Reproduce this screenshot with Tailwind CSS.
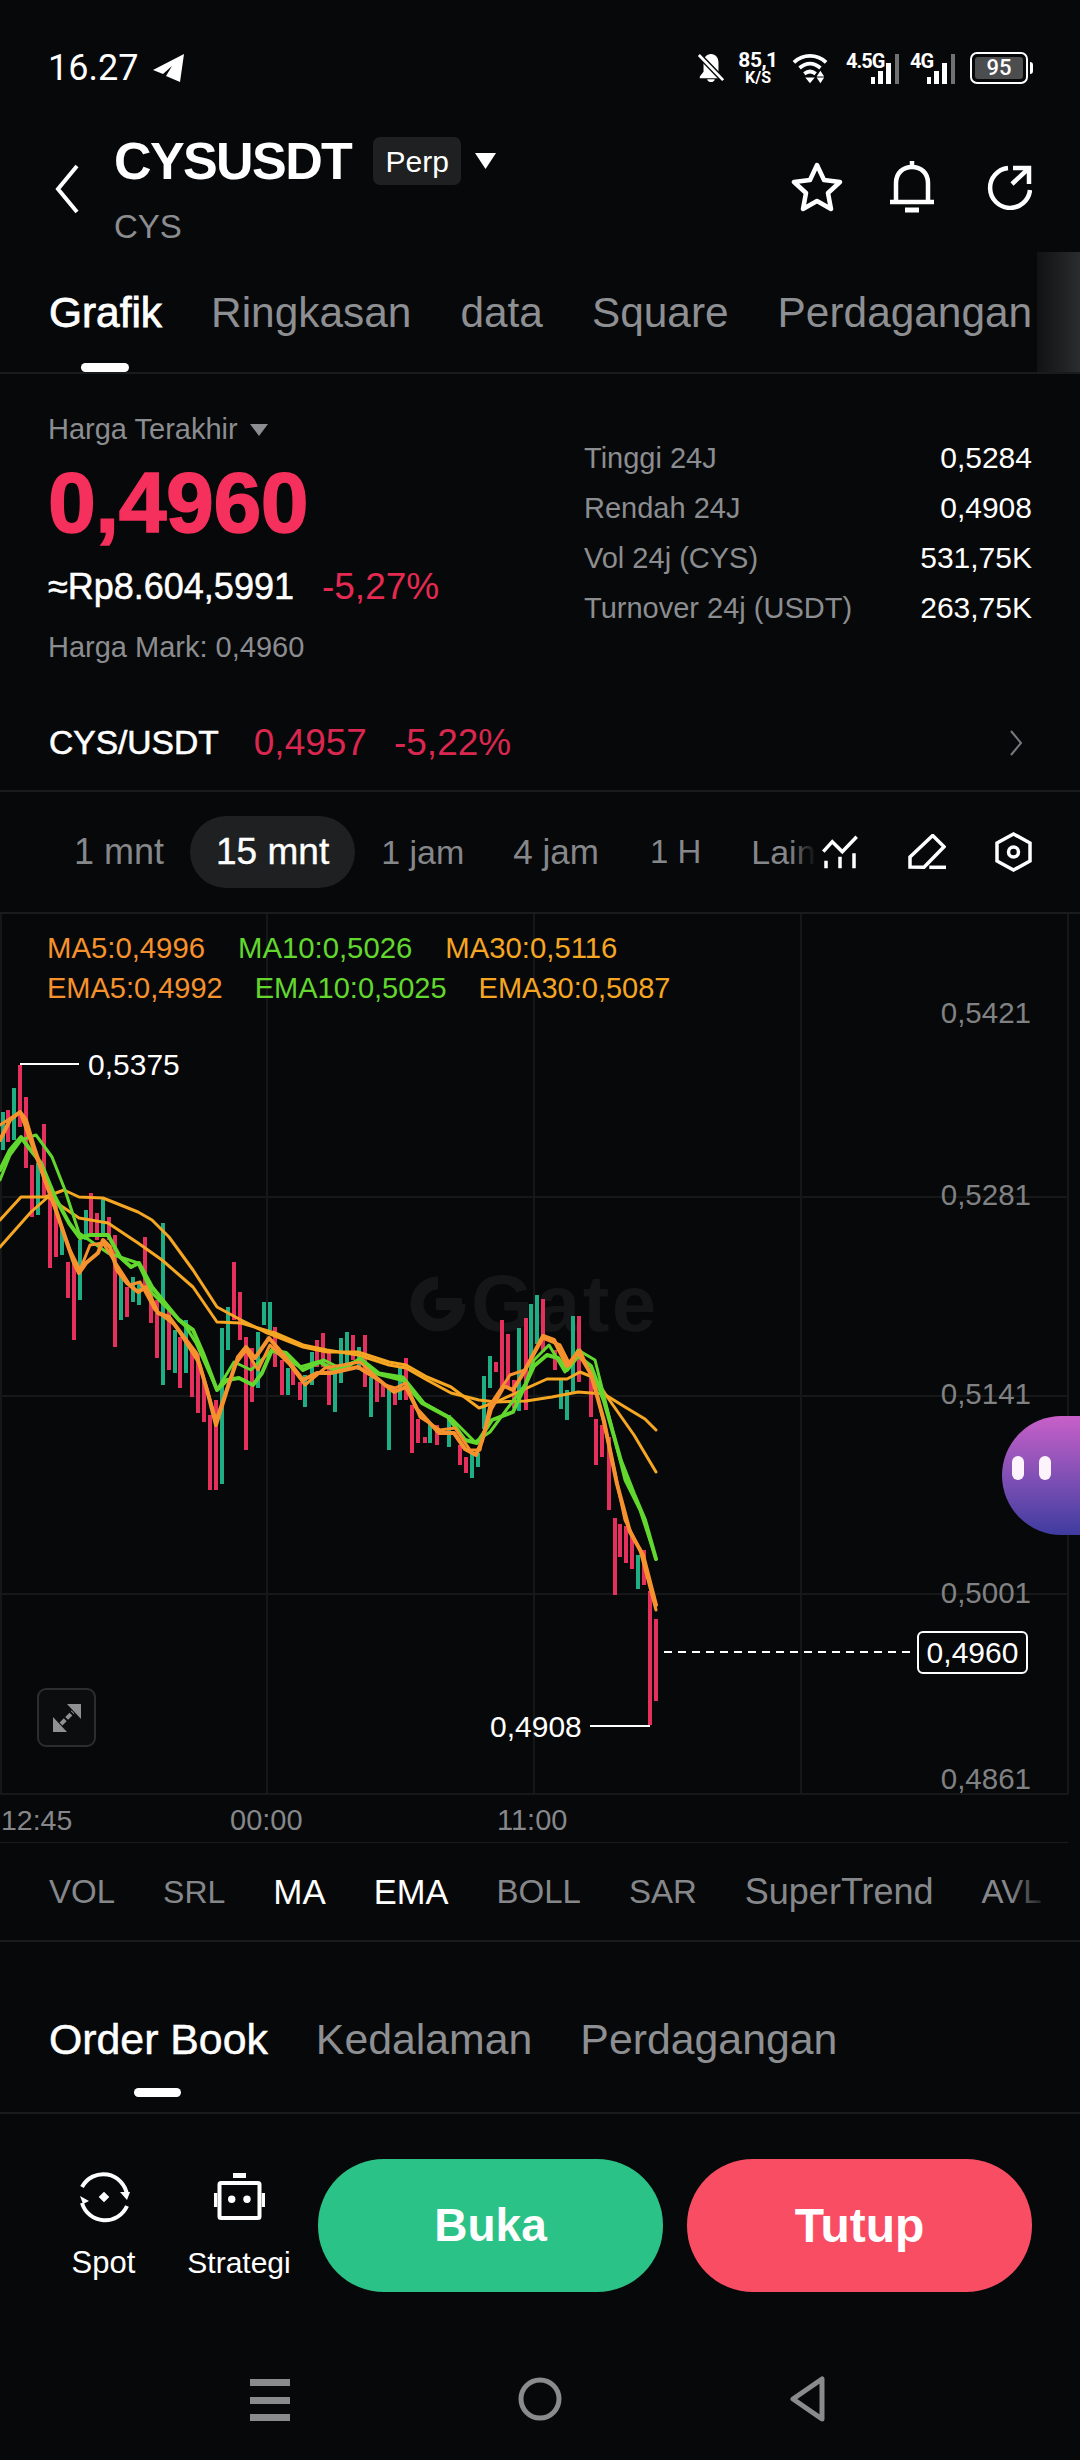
<!doctype html>
<html lang="id">
<head>
<meta charset="utf-8">
<title>CYSUSDT</title>
<script src="https://cdn.jsdelivr.net/npm/@tailwindcss/browser@4"></script>
</head>
<body class="bg-[#070809]">
<div class="relative flex h-[2460px] w-[1080px] flex-col overflow-hidden bg-[#070809] font-['Liberation_Sans',sans-serif] text-white">

  <!-- Status bar -->
  <div class="flex h-[100px] shrink-0 items-start justify-between pl-[48px] pr-[47px] pt-[50px] font-['Roboto',sans-serif]">
    <div class="flex items-center gap-[15px]">
      <span class="text-[36px] leading-[36px]">16.27</span>
      <svg class="h-[28px] w-[32px]" viewBox="0 0 32 28" fill="white"><path d="M31 0 0 16l10 4 9-8-6 10 14 6z"/></svg>
    </div>
    <div class="flex items-center">
      <svg class="h-[32px] w-[28px]" viewBox="0 0 30 32"><path fill="white" d="M15 1c-5 0-8 4-8 9v10l-4 5v2h24v-2l-4-5V10c0-5-3-9-8-9zM11 28h8c0 2-2 3-4 3s-4-1-4-3z"/><path d="M2 2l26 27" stroke="#070809" stroke-width="6"/><path d="M2 2l26 27" stroke="white" stroke-width="3"/></svg>
      <div class="ml-[15px] flex w-[36px] flex-col items-center leading-none">
        <span class="text-[21px] font-bold leading-[20px] [letter-spacing:-0.5px]">85,1</span>
        <span class="text-[16px] font-bold leading-[16px]">K/S</span>
      </div>
      <svg class="ml-[16px] h-[32px] w-[36px]" viewBox="0 0 38 32" fill="none" stroke="white" stroke-width="4"><path d="M2 10c10-9 24-9 34 0"/><path d="M8 16c7-6 15-6 22 0"/><path d="M13 22c4-3 8-3 12 0"/><path fill="white" stroke="none" d="M14 26h10l-5 6z"/><path fill="white" stroke="none" d="M30 19l4 6h-8zM26 26h8l-4 6z"/></svg>
      <div class="relative ml-[18px] h-[32px] w-[54px]">
        <span class="absolute left-0 top-0 text-[20px] font-bold leading-[18px] [letter-spacing:-1px]">4.5G</span>
        <svg class="absolute right-0 top-0 h-[32px] w-[33px]" viewBox="0 0 33 32"><path fill="white" d="M4 25h4v7H4zM11 19h5v13h-5zM19 11h5v21h-5z"/><path fill="#707172" d="M28 2h4v30h-4z"/></svg>
      </div>
      <div class="relative ml-[10px] h-[32px] w-[46px]">
        <span class="absolute left-0 top-0 text-[20px] font-bold leading-[18px] [letter-spacing:-1px]">4G</span>
        <svg class="absolute right-0 top-0 h-[32px] w-[33px]" viewBox="0 0 33 32"><path fill="white" d="M4 25h4v7H4zM11 19h5v13h-5zM19 11h5v21h-5z"/><path fill="#707172" d="M28 2h4v30h-4z"/></svg>
      </div>
      <div class="ml-[14px] flex items-center">
        <div class="flex h-[32px] w-[58px] items-center justify-center rounded-[7px] border-2 border-white p-[3px]">
          <span class="flex h-full w-full items-center justify-center rounded-[3px] bg-[#4c4d4e] text-[22px] font-medium leading-none">95</span>
        </div>
        <span class="ml-[2px] h-[12px] w-[3px] rounded-r-sm bg-white"></span>
      </div>
    </div>
  </div>

  <!-- Header -->
  <div class="relative flex h-[152px] shrink-0 items-start pl-[54px]">
    <svg class="mt-[64px] h-[50px] w-[26px]" viewBox="0 0 26 50" fill="none" stroke="white" stroke-width="4"><path d="M23 2 4 25l19 23"/></svg>
    <div class="ml-[34px] flex flex-col">
      <div class="mt-[37px] flex h-[48px] items-center">
        <span class="text-[52px] font-bold leading-none tracking-[-1.6px]">CYSUSDT</span>
        <span class="ml-[22px] flex h-[48px] w-[88px] items-center justify-center rounded-[7px] bg-[#1e2021] text-[30px]">Perp</span>
        <svg class="ml-[14px] h-[16px] w-[21px]" viewBox="0 0 21 16" fill="white"><path d="M0 0h21L10.500 16z"/></svg>
      </div>
      <span class="mt-[24px] text-[33px] leading-[36px] text-[#8b8d90]">CYS</span>
    </div>
    <div class="absolute left-[791px] top-[61px] flex items-center">
      <svg class="h-[50px] w-[52px]" viewBox="0 0 52 50" fill="none" stroke="white" stroke-width="4.500" stroke-linejoin="round"><path d="m26 3 7 15 16 2-12 11 3 16-14-8-14 8 3-16L3 20l16-2z"/></svg>
      <svg class="ml-[47px] h-[52px] w-[44px]" viewBox="0 0 44 52" fill="none" stroke="white" stroke-width="4.500"><path d="M22 0v5M6 40V22C6 12 13 6 22 6s16 6 16 16v18"/><path d="M0 41h44"/><path d="M15 49h14" stroke-width="5"/></svg>
      <svg class="ml-[52px] h-[46px] w-[46px]" viewBox="0 0 46 46" fill="none" stroke="white" stroke-width="4.500"><path d="M22 4a20 20 0 1 0 22 22"/><path d="M26 20 42 5"/><path d="M27 4h16v16"/></svg>
    </div>
  </div>

  <!-- Main tabs -->
  <div class="relative flex h-[122px] shrink-0 items-start gap-[49px] border-b-2 border-[#1a1b1c] pl-[49px] pt-[37px] text-[42.400px] leading-[48px] text-[#8d8f92]">
    <span class="text-white [-webkit-text-stroke:0.8px]">Grafik</span>
    <span>Ringkasan</span>
    <span>data</span>
    <span>Square</span>
    <span>Perdagangan</span>
    <span class="absolute bottom-0 left-[81px] h-[9px] w-[48px] rounded-full bg-white"></span>
    <span class="absolute bottom-0 right-0 top-0 w-[43px] bg-linear-to-r from-[#111213] to-[#2b2c2d]"></span>
  </div>

  <!-- Price summary -->
  <div class="relative h-[316px] shrink-0">
    <div class="absolute left-[48px] top-[38px] flex flex-col">
      <div class="flex h-[36px] items-center text-[29px] text-[#8b8d90]">
        Harga Terakhir
        <svg class="ml-[12px] h-[12px] w-[18px]" viewBox="0 0 18 12" fill="#8b8d90"><path d="M0 0h18L9 12z"/></svg>
      </div>
      <span class="mt-[7px] text-[86px] font-bold leading-[94px] tracking-[-0.5px] text-[#f6305c] [-webkit-text-stroke:1.5px]">0,4960</span>
      <div class="mt-[16px] flex h-[44px] items-center">
        <span class="text-[36px] [-webkit-text-stroke:0.5px]">≈Rp8.604,5991</span>
        <span class="ml-[28px] text-[37px] text-[#e52a52]">-5,27%</span>
      </div>
      <span class="mt-[20px] text-[29px] leading-[36px] text-[#8b8d90]">Harga Mark: 0,4960</span>
    </div>
    <div class="absolute left-[584px] right-[48px] top-[59px] grid grid-cols-[1fr_auto] text-[29px] leading-[50px]">
      <span class="text-[#8b8d90]">Tinggi 24J</span><span class="text-right text-[30px]">0,5284</span>
      <span class="text-[#8b8d90]">Rendah 24J</span><span class="text-right text-[30px]">0,4908</span>
      <span class="text-[#8b8d90]">Vol 24j (CYS)</span><span class="text-right text-[30px]">531,75K</span>
      <span class="text-[#8b8d90]">Turnover 24j (USDT)</span><span class="text-right text-[30px]">263,75K</span>
    </div>
  </div>

  <!-- Spot pair row -->
  <div class="flex h-[102px] shrink-0 items-start border-b-2 border-[#1a1b1c] pl-[49px] pr-[57px] pt-[31px] leading-[44px]">
    <span class="text-[33.600px] [-webkit-text-stroke:0.6px]">CYS/USDT</span>
    <span class="ml-[35px] text-[37px] text-[#d9274f]">0,4957</span>
    <span class="ml-[27px] text-[37px] text-[#d9274f]">-5,22%</span>
    <svg class="ml-auto mt-[9px] h-[26px] w-[14px]" viewBox="0 0 14 26" fill="none" stroke="#77797c" stroke-width="2"><path d="m2 1 10 12L2 25"/></svg>
  </div>

  <!-- Timeframes -->
  <div class="relative flex h-[122px] shrink-0 items-center border-b-2 border-[#1a1b1c] pl-[48px] text-[#85878a]">
    <span class="px-[26px] text-[36px]">1 mnt</span>
    <span class="flex h-[72px] items-center rounded-full bg-[#1e2021] px-[26px] text-[37px] text-white [-webkit-text-stroke:0.4px]">15 mnt</span>
    <span class="pl-[26px] pr-[25px] text-[34px]">1 jam</span>
    <span class="pl-[24px] pr-[25px] text-[35px]">4 jam</span>
    <span class="pl-[26px] pr-[24px] text-[33px]">1 H</span>
    <span class="w-[90px] overflow-hidden whitespace-nowrap pl-[26px] text-[34px]">Lain</span>
    <span class="absolute left-[790px] top-[20px] h-[80px] w-[26px] bg-linear-to-r from-transparent to-[#070809]"></span>
    <div class="absolute left-[822px] top-[40px] flex items-center">
      <svg class="h-[34px] w-[36px]" viewBox="0 0 36 34" fill="none" stroke="white" stroke-width="3.500"><path d="M1.300 16.700l9-10 10 10 14.400-15"/><path d="M4 25.700v7.600M18 21.700v11.600M32 18.300v15"/></svg>
      <svg class="ml-[50px] h-[36px] w-[38px]" viewBox="0 0 38 36" fill="none" stroke="white" stroke-width="3.500"><path d="M2 33V23L24.700 1.500 36 12.700 16 33.300z"/><path d="M21.300 33.300H38"/></svg>
      <svg class="ml-[49px] h-[40px] w-[37px]" viewBox="0 0 37 40" fill="none" stroke="white" stroke-width="3.500"><path d="M18.500 2 35 11v18l-16.500 9L2 29V11z"/><circle cx="18.500" cy="20" r="5"/></svg>
    </div>
  </div>

  <!-- Chart: everything in here is placed on a free canvas -->
  <div class="relative h-[929px] shrink-0">
    <div class="absolute left-[471px] top-[344px] text-[80px] font-bold leading-[92px] tracking-[2.500px] text-[#151617]">Gate</div>
    <!-- viewBox uses page coordinates -->
    <svg class="absolute left-0 top-0 h-[929px] w-[1080px]" viewBox="0 914 1080 929" fill="none">
      <g stroke="#161718" stroke-width="2">
        <path d="M0 1197H1068M0 1396H1068M0 1594H1068M0 1794H1068"/>
        <path d="M267 914V1794M534 914V1794M801 914V1794M1068 914V1794M1 914V1794"/>
        <path d="M0 1843H1068" stroke="#1a1b1c"/>
      </g>
      <path d="M438 1283a21 21 0 1 0 21 21" stroke="#151617" stroke-width="13"/>
      <path d="M436 1298h26v12h-26z" fill="#151617"/>

      <path stroke="#1fae83" stroke-width="4" d="M3 1112V1150M14 1088V1140M38 1163V1215M62 1227V1255M80 1240V1300M86 1210V1240M103 1197V1237M121 1273V1320M133 1277V1302M139 1283V1305M163 1223V1385M175 1330V1373M186 1320V1373M222 1328V1484M228 1307V1350M258 1332V1388M264 1302V1325M270 1302V1330M288 1368V1395M305 1375V1407M312 1352V1385M335 1373V1412M341 1338V1383M347 1332V1367M359 1347V1370M371 1377V1417M389 1387V1450M400 1368V1400M430 1423V1443M449 1415V1447M472 1453V1478M478 1453V1467M484 1376V1429M490 1356V1388M519 1328V1411M531 1304V1370M537 1295V1344M561 1378V1409M567 1390V1420M573 1316V1393M638 1555V1589"/>
      <path stroke="#e5305d" stroke-width="4" d="M8 1110V1142M20 1065V1127M26 1097V1168M32 1165V1217M44 1124V1197M50 1197V1268M56 1200V1257M68 1262V1298M74 1263V1340M91 1193V1233M97 1213V1240M109 1217V1240M115 1235V1347M127 1287V1317M145 1237V1290M151 1293V1323M157 1300V1358M169 1310V1370M180 1337V1388M192 1347V1397M198 1353V1413M204 1380V1422M210 1415V1490M216 1400V1490M234 1262V1320M240 1292V1340M246 1337V1450M252 1348V1402M275 1327V1367M282 1360V1395M293 1365V1385M300 1382V1400M317 1340V1367M323 1333V1367M329 1353V1405M353 1335V1360M365 1335V1387M377 1378V1402M383 1383V1397M395 1387V1405M406 1358V1400M412 1405V1453M418 1419V1443M425 1437V1443M437 1425V1445M460 1445V1465M466 1457V1473M496 1362V1372M502 1320V1390M508 1334V1386M514 1380V1408M526 1318V1410M543 1299V1352M555 1350V1370M579 1316V1382M591 1370V1417M596 1419V1465M602 1425V1457M609 1437V1510M615 1518V1595M620 1524V1557M626 1526V1563M632 1536V1569M644 1550V1585M650 1591V1725M656 1619V1701"/>

      <g stroke-width="3" stroke-linejoin="round" stroke-linecap="round">
        <polyline stroke="#f5a623" points="0,1220 21,1197 45,1197 64,1190 79,1197 103,1198 138,1212 152,1220 169,1237 193,1270 217,1307 241,1320 265,1332 303,1347 327,1352 358,1352 389,1362 406,1365 427,1377 451,1387 479,1408 496,1402 547,1379 567,1379 580,1372 595,1378 608,1398 634,1435 656,1472"/>
        <polyline stroke="#f5a623" points="0,1247 31,1212 48,1197 79,1218 108,1223 138,1243 162,1260 193,1287 217,1322 241,1323 275,1333 303,1345 327,1350 358,1355 389,1365 406,1368 427,1380 451,1393 479,1400 496,1402 526,1401 552,1397 578,1392 604,1394 625,1407 645,1419 656,1430"/>
        <polyline stroke="#62d82f" points="0,1180 10,1155 21,1140 36,1135 52,1157 65,1190 79,1233 108,1253 138,1263 152,1293 186,1327 196,1343 217,1390 234,1362 251,1370 272,1350 300,1367 324,1360 344,1370 360,1358 379,1373 403,1377 424,1403 451,1418 475,1442 490,1432 510,1405 525,1385 534,1360 549,1345 565,1372 578,1350 595,1360 610,1420 625,1480 640,1510 656,1559"/>
        <polyline stroke="#62d82f" stroke-width="4" points="0,1170 10,1150 21,1137 29,1148 41,1163 55,1197 69,1223 80,1238 90,1235 108,1235 120,1257 131,1267 139,1263 152,1287 165,1303 179,1320 193,1330 203,1353 217,1390 227,1380 239,1378 253,1385 262,1373 272,1350 286,1353 303,1370 320,1362 334,1370 360,1360 375,1373 403,1380 422,1403 448,1417 465,1440 477,1443 492,1420 513,1412 523,1390 534,1366 547,1355 558,1358 567,1370 578,1356 591,1366 604,1401 621,1461 634,1494 645,1520 656,1559"/>
        <polyline stroke="#f6922d" points="0,1125 20,1112 30,1140 50,1195 70,1250 80,1270 90,1245 103,1243 115,1262 130,1285 140,1282 155,1310 175,1325 200,1365 216,1420 235,1365 246,1350 258,1370 270,1345 290,1365 305,1385 325,1368 360,1362 385,1385 395,1388 406,1383 420,1417 440,1430 455,1428 470,1450 480,1450 490,1405 510,1375 525,1370 543,1338 560,1345 570,1365 580,1350 595,1385 610,1450 625,1520 640,1550 656,1610"/>
        <polyline stroke="#f6922d" stroke-width="4" points="0,1140 10,1120 20,1112 26,1120 34,1147 45,1180 55,1207 65,1237 74,1263 79,1273 86,1263 98,1253 103,1240 110,1247 117,1270 127,1283 138,1292 146,1287 158,1313 169,1317 186,1340 196,1353 207,1390 216,1425 227,1390 238,1357 246,1347 255,1358 269,1338 282,1353 303,1380 317,1373 331,1373 358,1367 379,1380 394,1392 406,1387 417,1409 439,1433 454,1433 465,1449 476,1455 482,1441 491,1409 504,1386 513,1390 524,1372 543,1336 554,1340 567,1366 578,1352 591,1374 604,1421 617,1484 630,1532 643,1555 656,1605"/>
      </g>

      <g stroke="white" stroke-width="2">
        <path d="M20 1064H79"/>
        <path d="M590 1726H650"/>
        <path d="M664 1652H912" stroke-dasharray="8 6"/>
      </g>
    </svg>

    <!-- Indicator legend -->
    <div class="absolute left-[47px] top-[16px] flex gap-[33px] text-[29.300px] leading-[36px]">
      <span class="text-[#f6922d]">MA5:0,4996</span><span class="text-[#62d82f]">MA10:0,5026</span><span class="text-[#f5a623]">MA30:0,5116</span>
    </div>
    <div class="absolute left-[47px] top-[56px] flex gap-[32px] text-[29px] leading-[36px]">
      <span class="text-[#f6922d]">EMA5:0,4992</span><span class="text-[#62d82f]">EMA10:0,5025</span><span class="text-[#f5a623]">EMA30:0,5087</span>
    </div>

    <!-- Price axis -->
    <span class="absolute right-[49px] top-[81px] text-[29.500px] leading-[36px] text-[#808183]">0,5421</span>
    <span class="absolute right-[49px] top-[263px] text-[29.500px] leading-[36px] text-[#808183]">0,5281</span>
    <span class="absolute right-[49px] top-[462px] text-[29.500px] leading-[36px] text-[#808183]">0,5141</span>
    <span class="absolute right-[49px] top-[661px] text-[29.500px] leading-[36px] text-[#808183]">0,5001</span>
    <span class="absolute right-[49px] top-[847px] text-[29.500px] leading-[36px] text-[#808183]">0,4861</span>

    <!-- Markers -->
    <span class="absolute left-[88px] top-[133px] text-[30px] leading-[36px]">0,5375</span>
    <span class="absolute left-[490px] top-[795px] text-[30px] leading-[36px]">0,4908</span>
    <span class="absolute left-[917px] top-[717px] flex h-[43px] w-[111px] items-center justify-center rounded-[6px] border-2 border-white bg-[#070809] text-[30px]">0,4960</span>

    <!-- Time axis -->
    <span class="absolute left-[1px] top-[888px] text-[28.500px] leading-[36px] text-[#85878a]">12:45</span>
    <span class="absolute left-[230px] top-[888px] text-[29px] leading-[36px] text-[#85878a]">00:00</span>
    <span class="absolute left-[497px] top-[888px] text-[29px] leading-[36px] text-[#85878a]">11:00</span>

    <!-- Expand button -->
    <div class="absolute left-[37px] top-[774px] flex h-[59px] w-[59px] items-center justify-center rounded-[9px] border-2 border-[#2c2d2e] bg-[#0c0d0e]">
      <svg class="h-[28px] w-[28px]" viewBox="0 0 28 28" fill="#8f9091"><path d="M14 0h14v15zM0 13v15h14z"/><path d="M8 20 20 8" fill="none" stroke="#8f9091" stroke-width="4" stroke-dasharray="6 2"/></svg>
    </div>

    <!-- Floating assistant -->
    <div class="absolute left-[1002px] top-[502px] flex h-[119px] w-[78px] items-center gap-[15px] rounded-l-full bg-linear-to-b from-[#c85fc9] to-[#3e3ba0] pb-[16px] pl-[10px]">
      <span class="h-[24px] w-[12px] rounded-full bg-[#fdf3fd]"></span>
      <span class="h-[24px] w-[12px] rounded-full bg-[#fdf3fd]"></span>
    </div>
  </div>

  <!-- Indicators -->
  <div class="relative flex h-[99px] shrink-0 items-start gap-[48px] overflow-hidden border-b-2 border-[#1a1b1c] pl-[49px] pt-[29px] text-[33px] leading-[40px] text-[#85878a]">
    <span>VOL</span><span class="text-[32px]">SRL</span><span class="text-[35px] text-white">MA</span><span class="text-[34.500px] text-white">EMA</span><span>BOLL</span><span>SAR</span><span class="text-[36px]">SuperTrend</span><span>AVL</span>
    <span class="absolute right-[30px] top-0 h-full w-[40px] bg-linear-to-r from-transparent to-[#070809]"></span>
  </div>

  <!-- Order book tabs -->
  <div class="relative flex h-[172px] shrink-0 items-start gap-[48px] border-b-2 border-[#1a1b1c] pl-[49px] pt-[73px] text-[42.800px] leading-[48px] text-[#8d8f92]">
    <span class="text-white [-webkit-text-stroke:0.5px]">Order Book</span>
    <span>Kedalaman</span>
    <span>Perdagangan</span>
    <span class="absolute bottom-[15px] left-[134px] h-[9px] w-[47px] rounded-full bg-white"></span>
  </div>

  <!-- Actions -->
  <div class="flex h-[215px] shrink-0 items-start pl-[72px] pr-[48px] pt-[45px]">
    <div class="flex w-[63px] flex-col items-center">
      <svg class="mt-[12px] h-[52px] w-[52px] shrink-0" viewBox="0 0 52 52" fill="none" stroke="white" stroke-width="4"><path d="M4 16A24 24 0 0 1 49 24"/><path d="M4 32A24 24 0 0 0 49 35"/><path fill="white" stroke="none" d="M26 20.700l5.300 5.300-5.300 5.300-5.300-5.300zM42 21h10l-3 8zM2 25l9 5-6 3z"/></svg>
      <span class="mt-[23px] whitespace-nowrap text-[31px] leading-[34px]">Spot</span>
    </div>
    <div class="ml-[52px] flex w-[104px] flex-col items-center">
      <svg class="mt-[14px] h-[47px] w-[51px] shrink-0" viewBox="0 0 51 47" fill="none" stroke="white" stroke-width="4"><path d="M19 0h13v5H19zM0 20h3.300v14H0zM47.700 20H51v14h-3.300z" fill="white" stroke="none"/><rect x="5.500" y="10" width="40" height="35" rx="1.500"/><circle cx="17.700" cy="26.300" r="3.700" fill="white" stroke="none"/><circle cx="33" cy="26.300" r="3.700" fill="white" stroke="none"/></svg>
      <span class="mt-[26px] whitespace-nowrap text-[30px] leading-[34px]">Strategi</span>
    </div>
    <div class="ml-[27px] flex h-[133px] w-[345px] items-center justify-center rounded-[66px] bg-[#2bc287] text-[46px] font-bold">Buka</div>
    <div class="ml-[24px] flex h-[133px] w-[345px] items-center justify-center rounded-[66px] bg-[#f94d63] text-[48px] font-bold">Tutup</div>
  </div>

  <!-- System nav -->
  <div class="relative flex-1">
    <svg class="absolute left-[250px] top-[49px] h-[44px] w-[40px]" viewBox="0 0 40 44" fill="#8a8b8c"><path d="M0 1h40v7H0zM0 19h40v7H0zM0 36h40v7H0z"/></svg>
    <svg class="absolute left-[518px] top-[48px] h-[44px] w-[44px]" viewBox="0 0 44 44" fill="none" stroke="#8a8b8c" stroke-width="5"><circle cx="22" cy="22" r="19"/></svg>
    <svg class="absolute left-[790px] top-[47px] h-[46px] w-[36px]" viewBox="0 0 36 46" fill="none" stroke="#8a8b8c" stroke-width="5" stroke-linejoin="round"><path d="M32 3v40L3 23z"/></svg>
  </div>
</div>
</body>
</html>
